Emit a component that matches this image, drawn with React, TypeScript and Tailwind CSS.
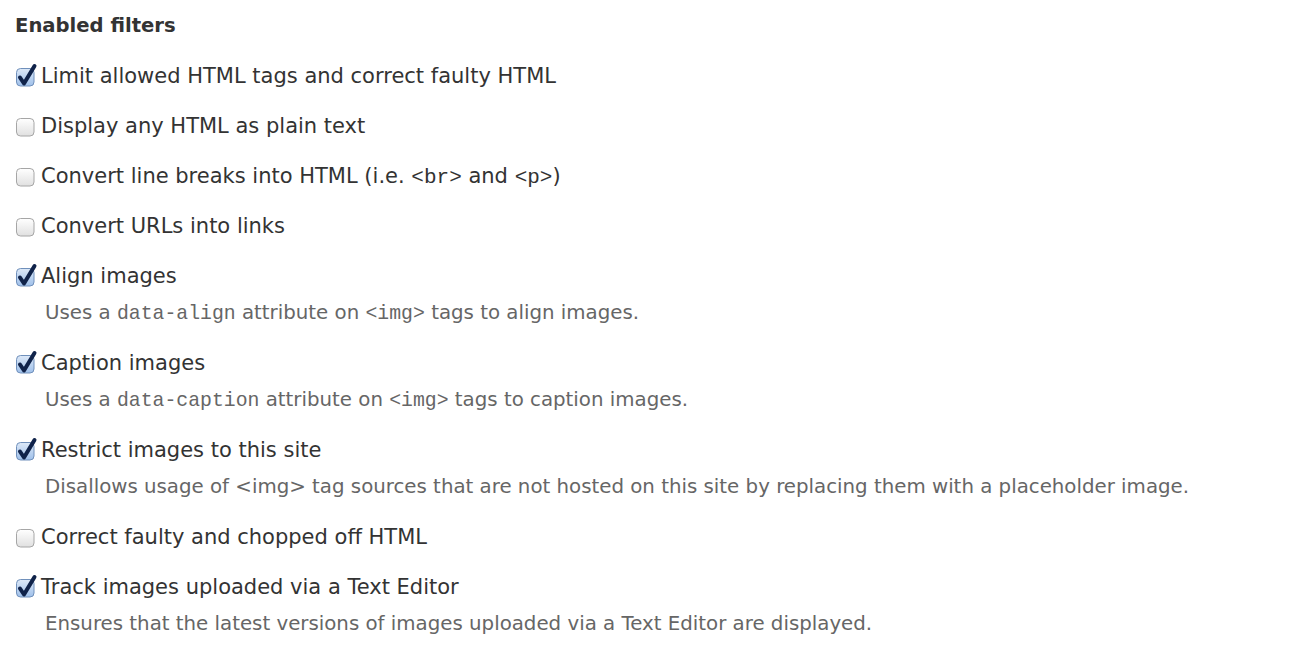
import React from 'react';

type Filter = {
  label: React.ReactNode;
  checked: boolean;
  desc?: React.ReactNode;
};

const Code: React.FC<{ children: React.ReactNode }> = ({ children }) => (
  <code className="font-['Liberation_Mono','DejaVu_Sans_Mono',monospace] leading-none">{children}</code>
);

const filters: Filter[] = [
  { label: 'Limit allowed HTML tags and correct faulty HTML', checked: true },
  { label: 'Display any HTML as plain text', checked: false },
  {
    label: (
      <>
        Convert line breaks into HTML (i.e. <Code>&lt;br&gt;</Code> and <Code>&lt;p&gt;</Code>)
      </>
    ),
    checked: false,
  },
  { label: 'Convert URLs into links', checked: false },
  {
    label: 'Align images',
    checked: true,
    desc: (
      <>
        Uses a <Code>data-align</Code> attribute on <Code>&lt;img&gt;</Code> tags to align images.
      </>
    ),
  },
  {
    label: 'Caption images',
    checked: true,
    desc: (
      <>
        Uses a <Code>data-caption</Code> attribute on <Code>&lt;img&gt;</Code> tags to caption images.
      </>
    ),
  },
  {
    label: 'Restrict images to this site',
    checked: true,
    desc: 'Disallows usage of <img> tag sources that are not hosted on this site by replacing them with a placeholder image.',
  },
  { label: 'Correct faulty and chopped off HTML', checked: false },
  {
    label: 'Track images uploaded via a Text Editor',
    checked: true,
    desc: 'Ensures that the latest versions of images uploaded via a Text Editor are displayed.',
  },
];

const Box: React.FC<{ checked: boolean }> = ({ checked }) => (
  <svg width="22" height="22" viewBox="0 0 22 22" className="shrink-0 overflow-visible">
    <defs>
      <linearGradient id="boxOff" x1="0" y1="0" x2="0" y2="1">
        <stop offset="0" stopColor="#ffffff" />
        <stop offset="1" stopColor="#e0e0e0" />
      </linearGradient>
      <linearGradient id="boxOn" x1="0" y1="0" x2="0" y2="1">
        <stop offset="0" stopColor="#dde9f8" />
        <stop offset="1" stopColor="#9fc0ea" />
      </linearGradient>
    </defs>
    <rect
      x="1.5"
      y="3.5"
      width="17.5"
      height="17.5"
      rx="4"
      fill={checked ? 'url(#boxOn)' : 'url(#boxOff)'}
      stroke={checked ? '#7090bb' : '#a6a6a6'}
    />
    {checked && (
      <path
        d="M5 12.5 L9 18.5 L19.5 1"
        fill="none"
        stroke="#10234a"
        strokeWidth="4"
        strokeLinecap="round"
        strokeLinejoin="round"
      />
    )}
  </svg>
);

export default function App() {
  return (
    <div className="min-h-screen bg-white pt-[12px] pl-[15px] text-[#333] font-['DejaVu_Sans','Liberation_Sans',sans-serif]">
      <h2 className="text-[19.6px] font-bold leading-[28px] mb-[22px]">Enabled filters</h2>
      <div>
        {filters.map((f, i) => (
          <div key={i} className={f.desc ? 'mb-[24px]' : 'mb-[22px]'}>
            <label className="flex items-center gap-[4px] h-[28px] leading-[28px] text-[21px]">
              <Box checked={f.checked} />
              <span>{f.label}</span>
            </label>
            {f.desc && (
              <p className="mt-[11px] pl-[30px] h-[24px] leading-[24px] text-[19.8px] text-[#666]">{f.desc}</p>
            )}
          </div>
        ))}
      </div>
    </div>
  );
}
